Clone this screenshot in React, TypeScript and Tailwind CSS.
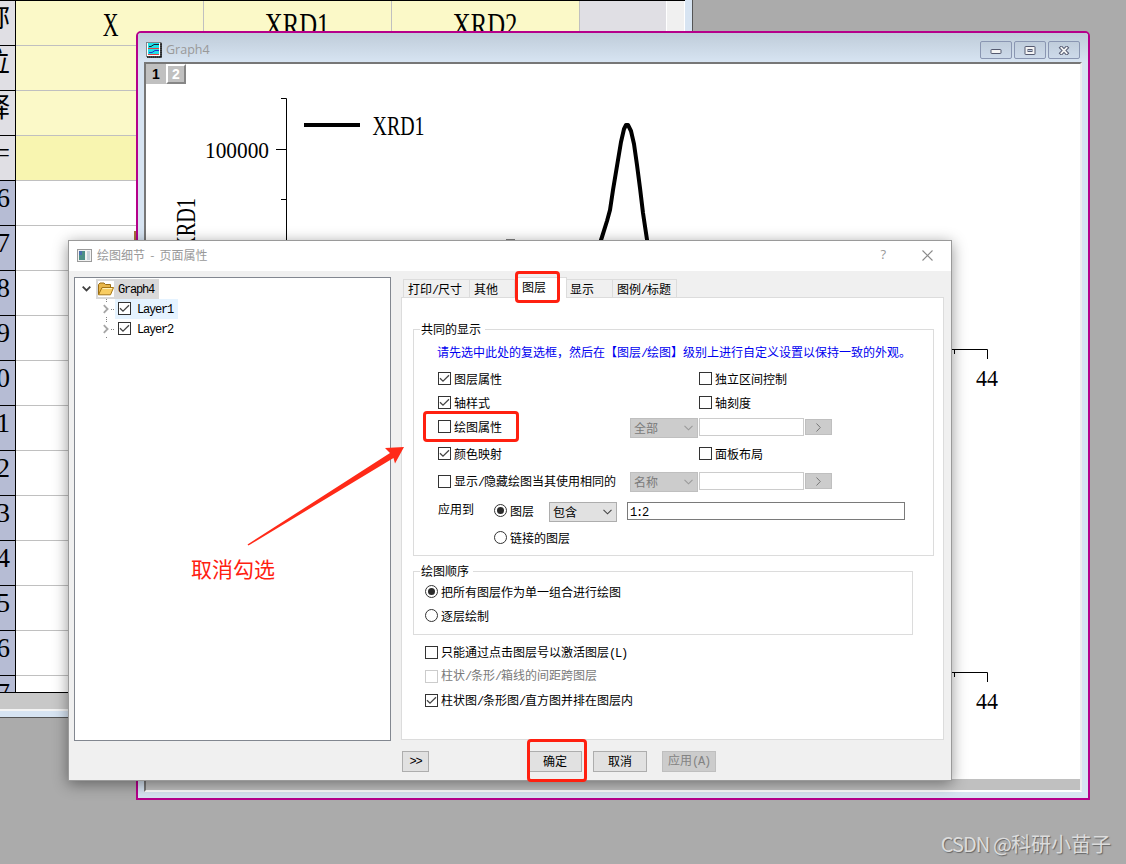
import type { ReactNode } from 'react';

const serif = 'font-["Liberation_Serif","Noto_Sans_CJK_SC",serif]';

const sheetRows = ['长名称', '单位', '注释', 'F(x)=', '6', '7', '8', '9', '10', '11', '12', '13', '14', '15', '16', '17'];
const sheetHeads = ['X', 'XRD1', 'XRD2'];

// Latin runs take half the width of a Chinese character
function Txt({ children }: { children: string }) {
  return (
    <span className="whitespace-nowrap">
      {children.split(/([\x20-\x7e]+)/).map((s, i) =>
        i % 2 ? (
          <span key={i} className='font-["Liberation_Mono",monospace] text-[12px] tracking-[-1.2px] whitespace-pre'>{s}</span>
        ) : s,
      )}
    </span>
  );
}

function Box({ checked, disabled }: { checked?: boolean; disabled?: boolean }) {
  return (
    <span className={`w-[13px] h-[13px] shrink-0 border bg-white ${disabled ? 'border-[#cccccc]' : 'border-[#333333]'}`}>
      {checked && (
        <svg className="block w-[11px] h-[11px]" viewBox="0 0 11 11" fill="none" stroke="#444" strokeWidth="1.3">
          <path d="M1 5.2 L4 8.2 L10 2.2" />
        </svg>
      )}
    </span>
  );
}

function Check({ label, checked, disabled, className = '' }: { label: string; checked?: boolean; disabled?: boolean; className?: string }) {
  return (
    <label className={`flex items-center gap-[3px] ${disabled ? 'text-[#7a7a7a]' : ''} ${className}`}>
      <Box checked={checked} disabled={disabled} />
      <Txt>{label}</Txt>
    </label>
  );
}

function Radio({ label, checked, className = '' }: { label: string; checked?: boolean; className?: string }) {
  return (
    <label className={`flex items-center gap-[3px] ${className}`}>
      <span className="w-[13px] h-[13px] shrink-0 rounded-full border border-[#333333] bg-white flex items-center justify-center">
        {checked && <span className="w-[7px] h-[7px] rounded-full bg-[#2b2b2b]" />}
      </span>
      <Txt>{label}</Txt>
    </label>
  );
}

function Select({ value, disabled }: { value: string; disabled?: boolean }) {
  return (
    <div className={`w-[68px] h-5 shrink-0 border pl-[3px] pr-1 flex items-center justify-between ${disabled ? 'bg-[#cccccc] border-[#bfbfbf] text-[#7a7a7a]' : 'bg-[#e1e1e1] border-[#adadad]'}`}>
      <Txt>{value}</Txt>
      <svg className="w-[9px] h-[6px]" viewBox="0 0 9 6" fill="none" stroke={disabled ? '#9a9a9a' : '#444'} strokeWidth="1.1">
        <path d="M0.5 0.8 L4.5 4.8 L8.5 0.8" />
      </svg>
    </div>
  );
}

function SelectRow({ value }: { value: string }) {
  return (
    <div className="flex items-start gap-px">
      <Select value={value} disabled />
      <div className="w-[105px] h-[18px] border border-[#cccccc] bg-white" />
      <div className="w-[27px] h-4 mt-px border border-[#bfbfbf] bg-[#cccccc] flex items-center justify-center">
        <svg className="w-[5px] h-[9px]" viewBox="0 0 5 9" fill="none" stroke="#777">
          <path d="M0.5 0.5 L4.3 4.5 L0.5 8.5" />
        </svg>
      </div>
    </div>
  );
}

function Group({ title, className, children }: { title: string; className: string; children: ReactNode }) {
  return (
    <section className={`relative border border-[#dcdcdc] ${className}`}>
      <h3 className="absolute left-[6px] -top-[10px] h-[18px] leading-[18px] bg-white pl-px pr-1"><Txt>{title}</Txt></h3>
      {children}
    </section>
  );
}

function Button({ children, className, disabled }: { children: string; className: string; disabled?: boolean }) {
  return (
    <button className={`h-[21px] border pb-[2px] flex items-center justify-center ${disabled ? 'bg-[#cccccc] border-[#bfbfbf] text-[#838383]' : 'bg-[#e1e1e1] border-[#adadad]'} ${className}`}>
      <Txt>{children}</Txt>
    </button>
  );
}

function Worksheet() {
  return (
    <div className="absolute left-0 top-0 w-[693px] h-[718px] bg-[#d7e4f2] border-r border-b border-[#555]">
      <div className="flex w-[685px] h-[693px] bg-white border-t border-b border-black overflow-hidden">
        <div className="w-[580px] shrink-0">
          {sheetRows.map((r, i) => (
            <div key={r} className="flex h-[45px]">
              <div className={`w-4 shrink-0 border-r border-b border-black overflow-hidden flex justify-end pr-[5px] ${i < 4 ? 'bg-[#e0dfe4]' : 'bg-[#b6bcd4]'}`}>
                <span className={`text-[27px] leading-[34px] whitespace-nowrap ${serif}`}>{r}</span>
              </div>
              {sheetHeads.map((h) => (
                <div key={h} className={`w-[188px] border-r border-b border-[#c0c0c0] flex justify-center ${i < 3 ? 'bg-[#fbf9c8]' : i === 3 ? 'bg-[#f8f5b0]' : 'bg-white'}`}>
                  {i === 0 && (
                    <span className={`text-[33px] leading-[48px] ${h === 'X' ? 'scale-x-[0.66] pl-[2px]' : 'scale-x-[0.75]'} ${serif}`}>{h}</span>
                  )}
                </div>
              ))}
            </div>
          ))}
        </div>
        <div className="w-[86px] bg-[#e0dfe4]" />
        <div className="w-[19px] bg-[#f0f0f0] border-x border-white" />
      </div>
      <div className="w-[685px] h-[18px] bg-[#c8c8c8] border-b-2 border-[#f4f4f4]" />
      {/* edge of a value running under the graph window */}
      <div className="absolute left-[134px] top-[231px] w-[2px] h-[10px] bg-[#a5703a]" />
    </div>
  );
}

function Chart() {
  return (
    <svg className={`block w-[934px] h-[695px] ${serif}`} viewBox="146 84 934 695">
      <g stroke="#000" fill="none">
        <path d="M281 98.5 H286.5 V300 M276 149.5 H286 M281 199.5 H286" />
        <path d="M940 349.5 H987.5 V359 M954.5 349 V354 M940 672.5 H987.5 V682 M954.5 672 V677" />
        <path d="M304 125 H360" strokeWidth="4" />
        <path d="M600 243 L602 237 L607 221 L610 210 L613 190 L616 172 L619 154 L621 142 L624 129 L626 125 L628 125 L631 131 L634 144 L637 165 L640 188 L643 213 L647.5 243" strokeWidth="4" strokeLinejoin="round" />
        <path d="M506 240.5 H515" strokeWidth="2" />
      </g>
      <text x="372.5" y="135" fontSize="27" textLength="52" lengthAdjust="spacingAndGlyphs">XRD1</text>
      <text x="205" y="157.5" fontSize="23" textLength="64" lengthAdjust="spacingAndGlyphs">100000</text>
      <text transform="translate(195 251) rotate(-90)" fontSize="27" textLength="53" lengthAdjust="spacingAndGlyphs">XRD1</text>
      <text x="976" y="385.5" fontSize="23" textLength="22" lengthAdjust="spacingAndGlyphs">44</text>
      <text x="976" y="708.5" fontSize="23" textLength="22" lengthAdjust="spacingAndGlyphs">44</text>
    </svg>
  );
}

function GraphWindow() {
  const btn = 'w-8 h-[18px] rounded-[2px] border border-[#8a96b2] bg-linear-to-b from-[#c0cddb] to-[#cddaea] flex items-center justify-center';
  return (
    <div className="absolute left-[136px] top-[31px] w-[954px] h-[769px] border-2 border-[#b5008a] rounded-t-[5px] bg-[#d7e4f2] overflow-hidden">
      <div className="h-[29px] pl-2 pr-2 flex items-start bg-linear-to-b from-[#bfccd9] to-[#d7e4f2]">
        <svg className="w-4 h-4 mt-[9px]" viewBox="0 0 16 16">
          <rect x="0.5" y="0.5" width="14.5" height="14.5" fill="#fff" stroke="#222" strokeDasharray="1 1" />
          <rect x="2" y="1" width="11" height="12" fill="#1fe0e6" />
          <path d="M3 4.5 H5 L8 2.5 H13" stroke="#123" fill="none" />
          <path d="M2 6.5 H13 M2 12.5 H13" stroke="#e04040" />
          <path d="M3 10.5 H6 L9 8.5 H13" stroke="#2233cc" fill="none" />
          <path d="M1 15 H15 V1" stroke="#111" strokeWidth="1.5" fill="none" />
        </svg>
        <span className='ml-1 mt-[8px] leading-[18px] text-[12.5px] text-[#999] font-["Open_Sans",sans-serif]'>Graph4</span>
        <div className="ml-auto mt-2 flex gap-0.5">
          <div className={btn}>
            <svg className="w-3 h-[9px]" viewBox="0 0 12 9"><rect x="1" y="3.5" width="10" height="4" rx="0.5" fill="#f4f4f4" stroke="#555a70" /></svg>
          </div>
          <div className={btn}>
            <svg className="w-3 h-[9px]" viewBox="0 0 12 9" stroke="#555a70"><rect x="1" y="0.5" width="10" height="8" rx="0.5" fill="#f4f4f4" /><rect x="4" y="3.5" width="4" height="2" fill="#b8c6dc" /></svg>
          </div>
          <div className={btn}>
            <svg className="w-3 h-[9px]" viewBox="0 0 12 9" fill="none"><path d="M2 0.5 L10 8.5 M10 0.5 L2 8.5" stroke="#555a70" strokeWidth="3.8" /><path d="M2.7 1.2 L9.3 7.8 M9.3 1.2 L2.7 7.8" stroke="#f4f4f4" strokeWidth="1.8" /></svg>
          </div>
        </div>
      </div>
      <div className="mx-[6px] h-[730px] border-2 border-t-[#777] border-l-[#777] border-r-[#eeeeee] border-b-white bg-white">
        <div className='h-5 flex text-[14px] font-bold leading-[20px] text-center font-["Liberation_Sans",sans-serif]'>
          <div className="w-5 bg-[#c0c0c0] text-black">1</div>
          <div className="w-5 h-5 bg-[#c0c0c0] text-white border-2 border-t-white border-l-white border-r-[#868686] border-b-[#868686] leading-[16px]">2</div>
        </div>
        <Chart />
        <div className="h-[11px] bg-[#c0c0c0]" />
      </div>
    </div>
  );
}

function Tree() {
  return (
    <div className="w-[317px] h-[464px] border border-[#828790] bg-white pt-px">
      <div className="flex items-center h-5 pl-[7px]">
        <svg className="w-[9px] h-[6px] mr-[5px]" viewBox="0 0 9 6" fill="none" stroke="#404040" strokeWidth="1.8"><path d="M0.7 0.7 L4.5 4.5 L8.3 0.7" /></svg>
        <div className="h-5 w-[63px] bg-[#d9d9d9] flex items-center pl-[2px] pb-px">
          <svg className="w-4 h-4 bg-white" viewBox="0 0 16 16">
            <path d="M0.5 13.5 V3.5 L2 2 H6 L7.5 3.5 H12.5 V6" fill="#e8b64a" stroke="#9a6c14" />
            <path d="M0.5 13.8 L4 6.5 H15.6 L12.5 13.8 Z" fill="#f8cd62" stroke="#a67717" />
            <path d="M4.6 7.5 H14" stroke="#fff0b8" />
          </svg>
          <span className="ml-1"><Txt>Graph4</Txt></span>
        </div>
      </div>
      {['Layer1', 'Layer2'].map((name, i) => (
        <div key={name} className="flex items-center h-5 pl-[27px]">
          <svg className="w-[13px] h-5" viewBox="0 0 13 20" fill="none">
            <path d="M1.8 6.2 L5.6 10 L1.8 13.8" stroke="#a6a6a6" strokeWidth="1.8" />
            <path d="M4.5 0 V3 M4.5 18 V20 M9 10.5 H13" stroke="#808080" strokeDasharray="1 1" />
          </svg>
          <div className={`h-5 w-[63px] flex items-center gap-[6px] pl-[3px] pb-px ${i === 0 ? 'bg-[#e5f3ff]' : ''}`}>
            <Box checked />
            <Txt>{name}</Txt>
          </div>
        </div>
      ))}
    </div>
  );
}

function LayersTab() {
  return (
    <div className="h-[443px] border border-[#dcdcdc] bg-white pl-[11px] pt-[31px]">
      <Group title="共同的显示" className="w-[521px] h-[227px] pt-2 pl-6">
        <p className="h-7 leading-[28px] -ml-px text-[#0000f0]"><Txt>请先选中此处的复选框，然后在【图层/绘图】级别上进行自定义设置以保持一致的外观。</Txt></p>
        <div className="h-[25px] flex items-center">
          <Check label="图层属性" checked className="w-[261px]" />
          <Check label="独立区间控制" />
        </div>
        <div className="h-[23px] flex items-center">
          <Check label="轴样式" checked className="w-[261px]" />
          <Check label="轴刻度" />
        </div>
        <div className="h-[25px] flex">
          <Check label="绘图属性" className="w-[192px]" />
          <div className="pt-1"><SelectRow value="全部" /></div>
        </div>
        <div className="h-[29px] flex items-center">
          <Check label="颜色映射" checked className="w-[261px]" />
          <Check label="面板布局" />
        </div>
        <div className="h-[27px] flex">
          <Check label="显示/隐藏绘图当其使用相同的" className="w-[192px]" />
          <div className="pt-1"><SelectRow value="名称" /></div>
        </div>
        <div className="h-[30px] flex items-start pt-[7px]">
          <span className="w-[56px] leading-[13px]"><Txt>应用到</Txt></span>
          <Radio label="图层" checked className="w-[55px] h-[17px]" />
          <Select value="包含" />
          <div className="ml-[10px] w-[278px] h-[18px] border border-[#7a7a7a] bg-white pl-[2px] leading-[15px]"><Txt>1:2</Txt></div>
        </div>
        <Radio label="链接的图层" className="h-[25px] ml-[56px]" />
      </Group>
      <Group title="绘图顺序" className="mt-[15px] w-[500px] h-16 pl-[11px] pt-2">
        <Radio label="把所有图层作为单一组合进行绘图" checked className="h-[23px]" />
        <Radio label="逐层绘制" className="h-[25px]" />
      </Group>
      <div className="pl-3 pt-[5px]">
        <Check label="只能通过点击图层号以激活图层(L)" className="h-[25px]" />
        <Check label="柱状/条形/箱线的间距跨图层" disabled className="h-[22px]" />
        <Check label="柱状图/条形图/直方图并排在图层内" checked className="h-[27px]" />
      </div>
    </div>
  );
}

function Dialog() {
  const tab = 'h-[18px] border border-b-0 border-[#dcdcdc] bg-[#f0f0f0] pl-1 leading-[17px]';
  return (
    <div className="absolute left-[68px] top-[240px] w-[884px] h-[541px] border border-[#9a9a9a] bg-[#f0f0f0] shadow-[0_3px_14px_rgba(0,0,0,0.42)]">
      <div className="h-[30px] bg-white flex items-center pl-2 pr-[18px] pb-[2px] text-[#999]">
        <svg className="w-[15px] h-[13px] mr-[5px]" viewBox="0 0 15 13">
          <rect x="0.5" y="0.5" width="14" height="12" fill="#f2f2f2" stroke="#9a9a9a" />
          <rect x="2" y="2" width="6" height="9" fill="#4c8f86" />
          <rect x="2" y="2" width="3" height="4" fill="#4a6fae" />
          <rect x="10" y="2" width="3" height="9" fill="#c9d3da" />
        </svg>
        <span className='text-[12px] [word-spacing:2.5px] font-["Noto_Sans_CJK_SC",sans-serif]'>绘图细节 - 页面属性</span>
        <span className='ml-auto mr-[36px] text-[13px] font-["Open_Sans",sans-serif]'>?</span>
        <svg className="w-[11px] h-[11px]" viewBox="0 0 11 11" stroke="#8a8a8a" strokeWidth="1.1"><path d="M0.5 0.5 L10.5 10.5 M10.5 0.5 L0.5 10.5" /></svg>
      </div>
      <div className="flex pl-[5px] pt-[6px]">
        <Tree />
        <div className="ml-[10px] w-[543px]">
          <div className="h-5 flex items-end pl-[2px] relative">
            <div className={`${tab} w-[66px] border-r-0`}><Txt>打印/尺寸</Txt></div>
            <div className={`${tab} w-[46px]`}><Txt>其他</Txt></div>
            <div className="h-[21px] w-[52px] -mb-px border border-b-0 border-[#dcdcdc] bg-white pl-[6px] leading-[17px]"><Txt>图层</Txt></div>
            <div className={`${tab} w-[45px] border-x-0 pl-[3px]`}><Txt>显示</Txt></div>
            <div className={`${tab} w-[65px]`}><Txt>图例/标题</Txt></div>
          </div>
          <LayersTab />
        </div>
      </div>
      <div className="flex pl-[333px] pt-[10px]">
        <Button className="w-[27px]">{'>>'}</Button>
        <Button className="ml-[99px] w-[54px]">确定</Button>
        <Button className="ml-[11px] w-[54px]">取消</Button>
        <Button className="ml-[15px] w-[54px]" disabled>应用(A)</Button>
      </div>
    </div>
  );
}

// Red marks drawn over the dialog
function Annotations() {
  const mark = 'absolute border-3 border-[#ff2010] rounded-[4px]';
  return (
    <>
      <div className={`${mark} left-[515px] top-[271px] w-[45px] h-8`} />
      <div className={`${mark} left-[423px] top-[411px] w-24 h-[31px]`} />
      <div className={`${mark} left-[527px] top-[739px] w-[60px] h-[43px]`} />
      <svg className="absolute left-[240px] top-[440px] w-[170px] h-[110px]" viewBox="240 440 170 110" fill="#ff2a18">
        <path d="M247.5 544.5 L390 453 L385 448 L404 447 L395 463.5 L393.5 458 L248.5 545.5 Z" />
      </svg>
      <div className="absolute left-[191px] top-[553px] text-[21px] leading-[30px] text-[#ff2010]">取消勾选</div>
    </>
  );
}

export default function App() {
  return (
    <div className='relative w-[1126px] h-[864px] overflow-hidden bg-[#ababab] text-[12px] text-black font-["Noto_Sans_CJK_SC",sans-serif]'>
      <Worksheet />
      <GraphWindow />
      <Dialog />
      <Annotations />
      <div className="absolute right-[15px] top-[829px] text-[20px] leading-[30px] whitespace-nowrap text-[#dcdcdc] [text-shadow:1px_1px_1px_#666]">
        <span className="tracking-[-0.9px]">CSDN @</span>科研小苗子
      </div>
    </div>
  );
}
